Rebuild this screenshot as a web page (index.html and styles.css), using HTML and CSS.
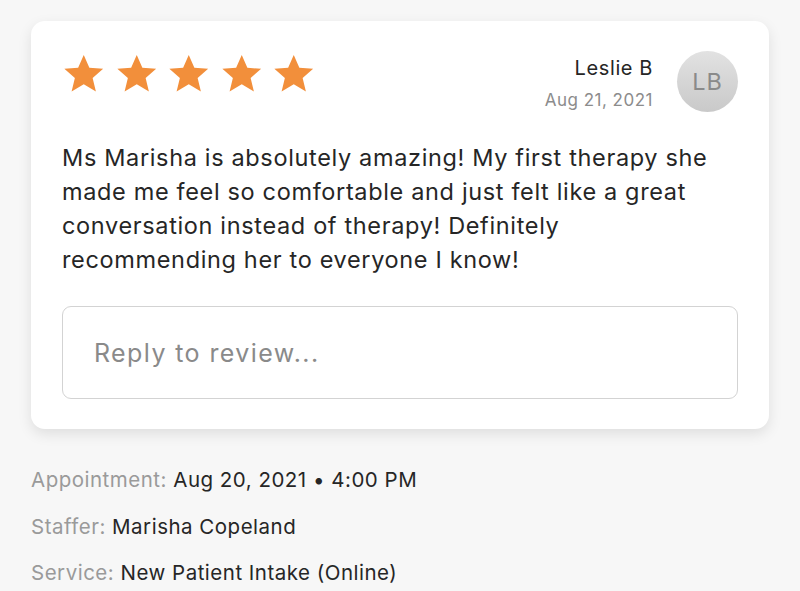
FILE: index.html
```html
<!DOCTYPE html>
<html lang="en">
<head>
    <meta charset="UTF-8">
    <meta name="viewport" content="width=device-width, initial-scale=1.0">
    <title>Review</title>
    <link rel="stylesheet" href="styles.css">
</head>
<body>
    <div class="review-card">
        <div class="review-head">
            <div class="stars">
                <svg class="star" viewBox="0 0 24 24"><path d="M12 1.6l3.1 7.1 7.6.6-5.8 5 1.8 7.5L12 17.8l-6.7 4 1.8-7.5-5.8-5 7.6-.6z"/></svg>
                <svg class="star" viewBox="0 0 24 24"><path d="M12 1.6l3.1 7.1 7.6.6-5.8 5 1.8 7.5L12 17.8l-6.7 4 1.8-7.5-5.8-5 7.6-.6z"/></svg>
                <svg class="star" viewBox="0 0 24 24"><path d="M12 1.6l3.1 7.1 7.6.6-5.8 5 1.8 7.5L12 17.8l-6.7 4 1.8-7.5-5.8-5 7.6-.6z"/></svg>
                <svg class="star" viewBox="0 0 24 24"><path d="M12 1.6l3.1 7.1 7.6.6-5.8 5 1.8 7.5L12 17.8l-6.7 4 1.8-7.5-5.8-5 7.6-.6z"/></svg>
                <svg class="star" viewBox="0 0 24 24"><path d="M12 1.6l3.1 7.1 7.6.6-5.8 5 1.8 7.5L12 17.8l-6.7 4 1.8-7.5-5.8-5 7.6-.6z"/></svg>
            </div>
            <div class="author">
                <div class="author-text">
                    <div class="author-name">Leslie B</div>
                    <div class="author-date">Aug 21, 2021</div>
                </div>
                <div class="avatar">LB</div>
            </div>
        </div>

        <p class="review-body">Ms Marisha is absolutely amazing! My first therapy she made me feel so comfortable and just felt like a great conversation instead of therapy! Definitely recommending her to everyone I know!</p>

        <div class="reply-box">
            <span class="reply-placeholder">Reply to review...</span>
        </div>
    </div>

    <div class="details">
        <div class="detail-row"><span class="detail-label">Appointment:</span> <span class="detail-value">Aug 20, 2021 &bull; 4:00 PM</span></div>
        <div class="detail-row"><span class="detail-label">Staffer:</span> <span class="detail-value">Marisha Copeland</span></div>
        <div class="detail-row"><span class="detail-label">Service:</span> <span class="detail-value">New Patient Intake (Online)</span></div>
    </div>
</body>
</html>
```

FILE: styles.css
```css
* {
    margin: 0;
    padding: 0;
    box-sizing: border-box;
}

body {
    font-family: 'Inter', 'Liberation Sans', sans-serif;
    color: #262626;
    background: #f7f7f7;
    padding: 21px 31px 0 31px;
}

.review-card {
    background: white;
    border-radius: 14px;
    box-shadow: 0 5px 14px rgba(0,0,0,0.10);
    padding: 30px 31px 30px 31px;
}

.review-head {
    display: flex;
    justify-content: space-between;
    align-items: flex-start;
}

.stars {
    display: flex;
    gap: 9px;
    padding-top: 1px;
}

.star {
    width: 43.5px;
    height: 43.5px;
    fill: #f28f3b;
}

.author {
    display: flex;
    align-items: flex-start;
    gap: 24px;
}

.author-text {
    text-align: right;
    padding-top: 3px;
}

.author-name {
    font-size: 20px;
    letter-spacing: 0.6px;
    color: #262626;
    line-height: 28px;
}

.author-date {
    margin-top: 4px;
    font-size: 17px;
    letter-spacing: 0.5px;
    color: #8c8c8c;
    line-height: 28px;
}

.avatar {
    width: 61px;
    height: 61px;
    border-radius: 50%;
    background: linear-gradient(#e2e2e2, #c9c9c9);
    color: #8a8a8a;
    font-size: 23.5px;
    letter-spacing: 1px;
    display: flex;
    align-items: center;
    justify-content: center;
}

.review-body {
    margin-top: 27px;
    padding-right: 4px;
    font-size: 23.5px;
    letter-spacing: 0.65px;
    line-height: 34px;
    color: #262626;
}

.reply-box {
    margin-top: 29px;
    height: 93px;
    border: 1.5px solid #d3d3d3;
    border-radius: 9px;
    display: flex;
    align-items: center;
    padding-left: 31px;
}

.reply-placeholder {
    font-size: 25px;
    letter-spacing: 1.4px;
    color: #8a8a8a;
}

.details {
    padding-top: 28px;
}

.detail-row {
    font-size: 20.5px;
    letter-spacing: 0.5px;
    line-height: 46.5px;
}

.detail-label {
    color: #9a9a9a;
}

.detail-value {
    color: #262626;
}
```
